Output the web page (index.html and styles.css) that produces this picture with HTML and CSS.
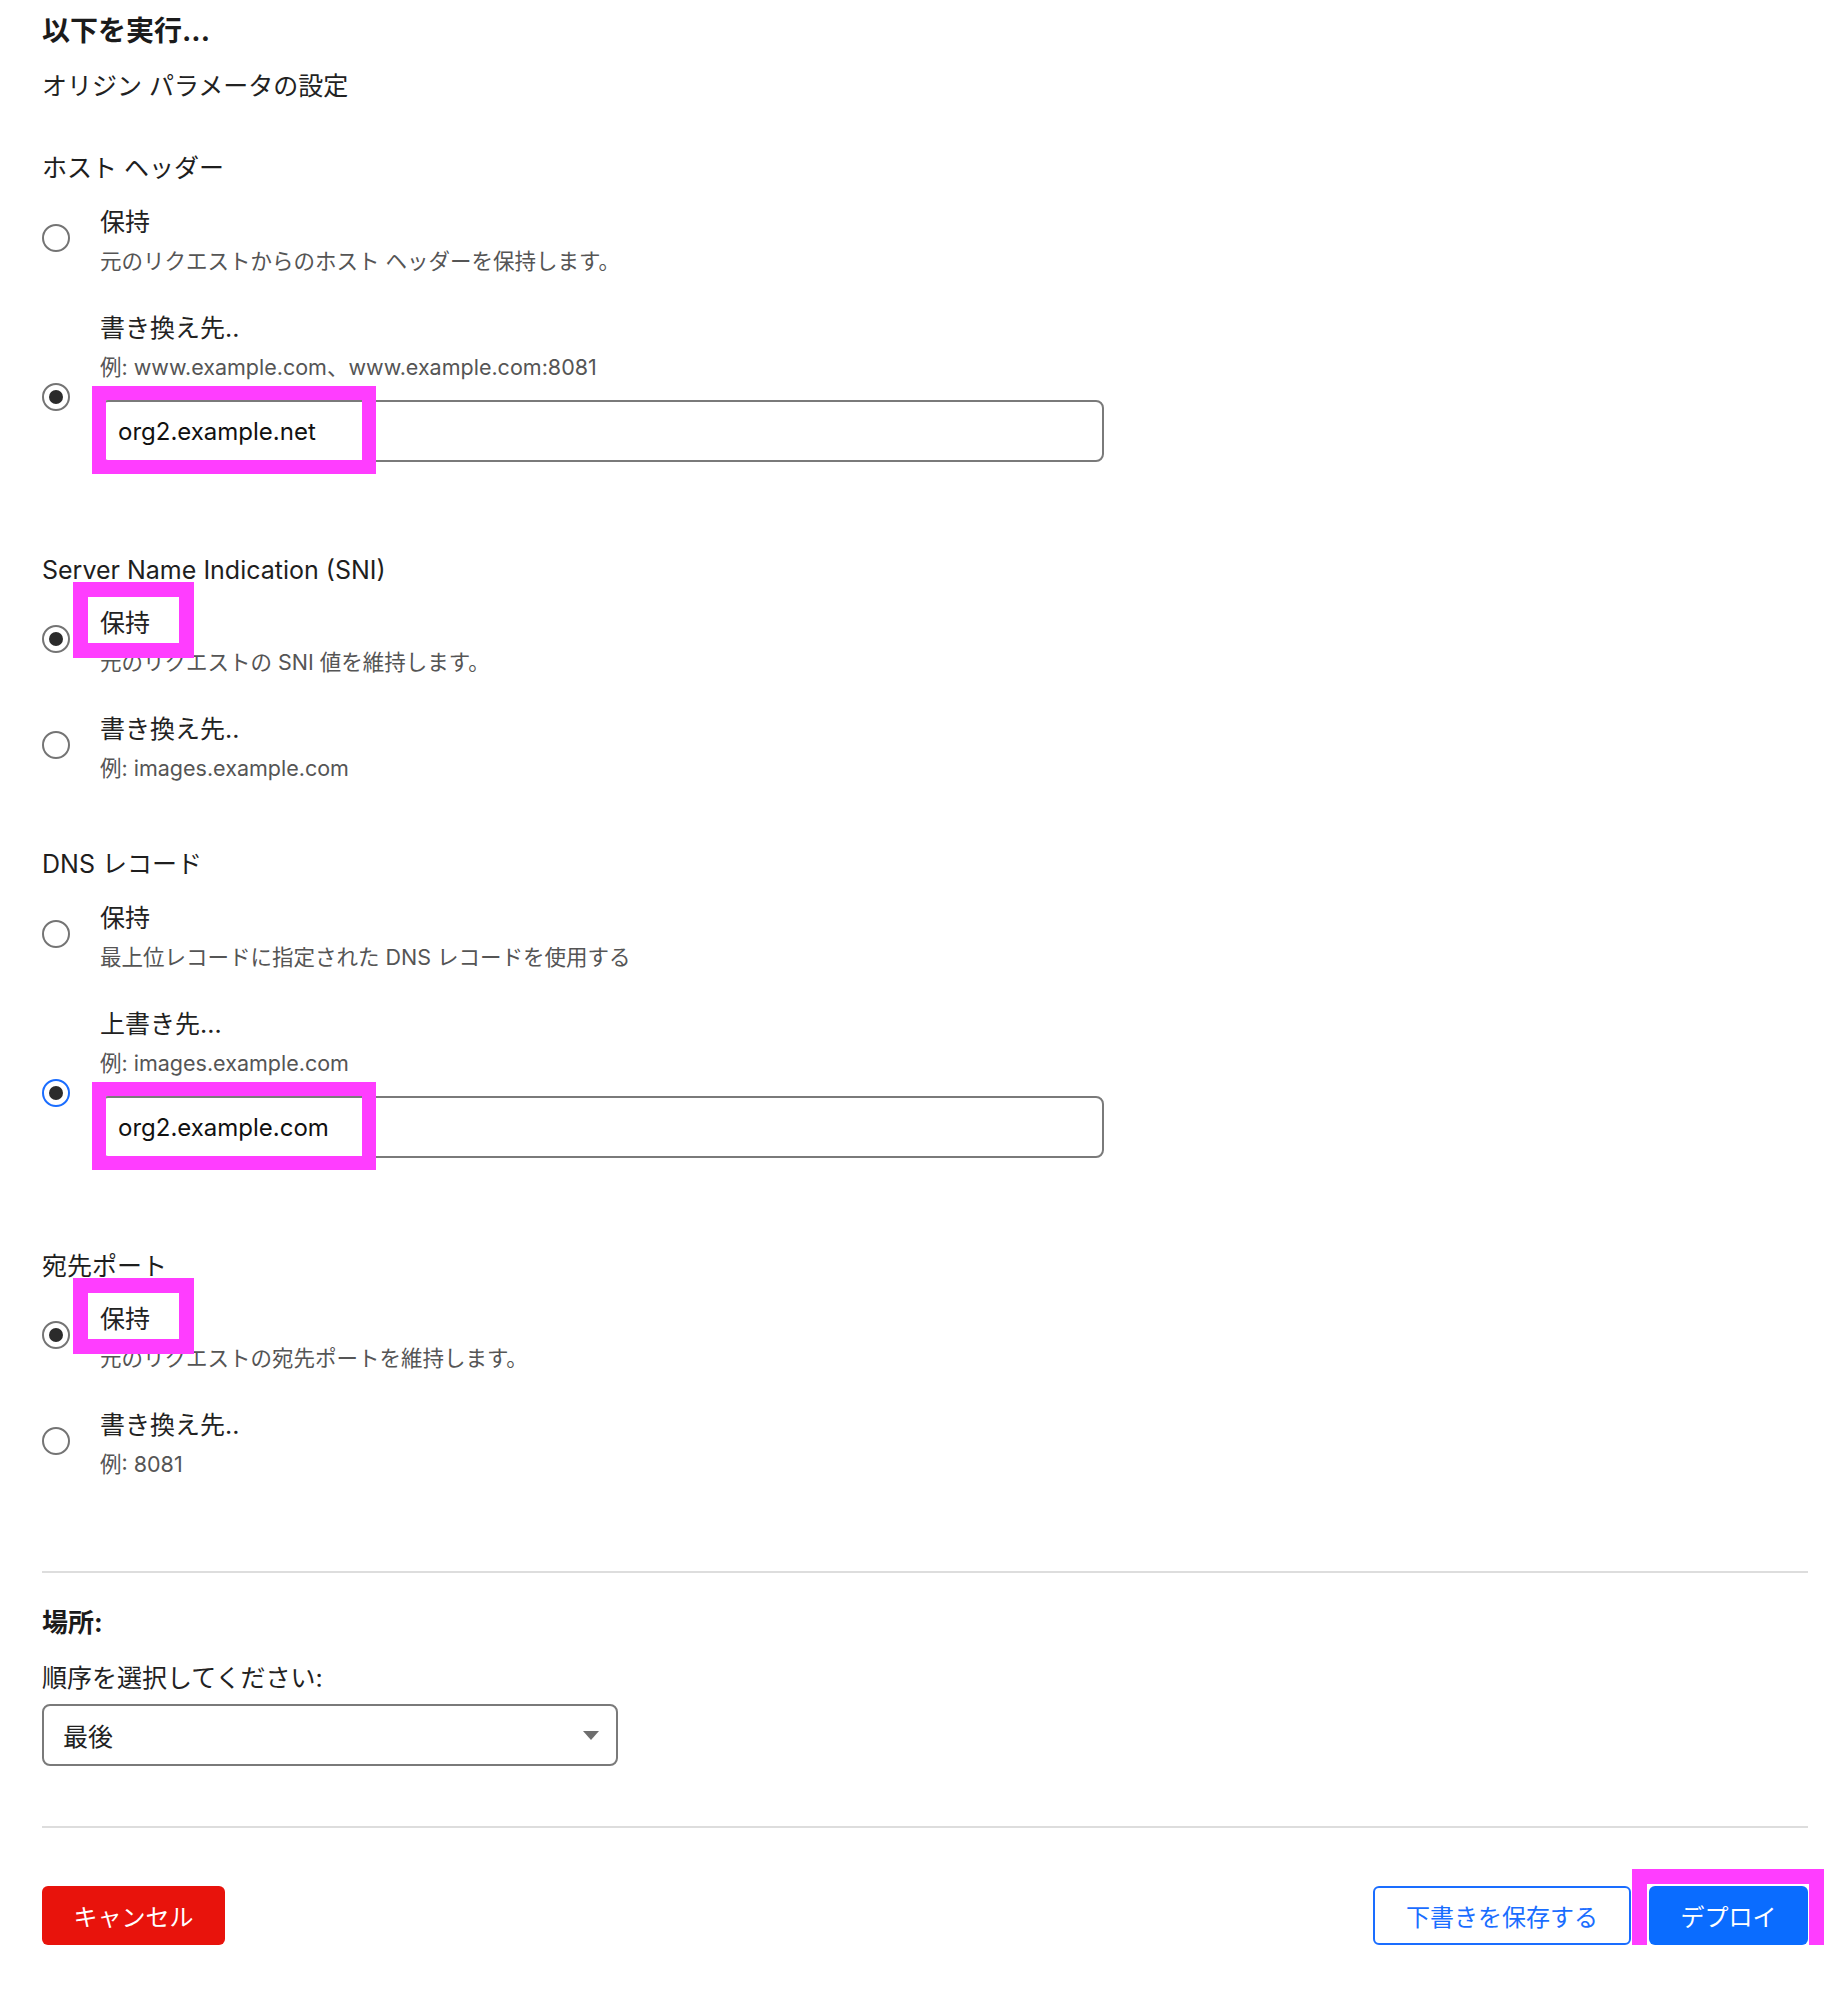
FILE: index.html
```html
<!DOCTYPE html>
<html lang="ja">
<head>
<meta charset="utf-8">
<title>以下を実行...</title>
<link rel="stylesheet" href="styles.css">
</head>
<body>
<div class="page">
  <h1 class="title">以下を実行...</h1>
  <p class="subtitle">オリジン パラメータの設定</p>

  <section class="group group-first">
    <h2 class="group-title">ホスト ヘッダー</h2>
    <div class="option">
      <span class="radio"></span>
      <div class="option-body">
        <div class="option-label">保持</div>
        <div class="option-desc">元のリクエストからのホスト ヘッダーを保持します。</div>
      </div>
    </div>
    <div class="option option-with-input">
      <span class="radio checked"></span>
      <div class="option-body">
        <div class="option-label">書き換え先..</div>
        <div class="option-desc">例: www.example.com、www.example.com:8081</div>
        <div class="field">
          <div class="text-input">org2.example.net</div>
          <span class="mark mark-input"></span>
        </div>
      </div>
    </div>
  </section>

  <section class="group">
    <h2 class="group-title">Server Name Indication (SNI)</h2>
    <div class="option option-tight">
      <span class="radio checked"></span>
      <div class="option-body">
        <div class="option-label label-marked">保持<span class="mark mark-label"></span></div>
        <div class="option-desc">元のリクエストの SNI 値を維持します。</div>
      </div>
    </div>
    <div class="option">
      <span class="radio"></span>
      <div class="option-body">
        <div class="option-label">書き換え先..</div>
        <div class="option-desc">例: images.example.com</div>
      </div>
    </div>
  </section>

  <section class="group">
    <h2 class="group-title">DNS レコード</h2>
    <div class="option">
      <span class="radio"></span>
      <div class="option-body">
        <div class="option-label">保持</div>
        <div class="option-desc">最上位レコードに指定された DNS レコードを使用する</div>
      </div>
    </div>
    <div class="option option-with-input">
      <span class="radio checked focused"></span>
      <div class="option-body">
        <div class="option-label">上書き先...</div>
        <div class="option-desc">例: images.example.com</div>
        <div class="field">
          <div class="text-input">org2.example.com</div>
          <span class="mark mark-input"></span>
        </div>
      </div>
    </div>
  </section>

  <section class="group">
    <h2 class="group-title">宛先ポート</h2>
    <div class="option option-tight">
      <span class="radio checked"></span>
      <div class="option-body">
        <div class="option-label label-marked">保持<span class="mark mark-label"></span></div>
        <div class="option-desc">元のリクエストの宛先ポートを維持します。</div>
      </div>
    </div>
    <div class="option">
      <span class="radio"></span>
      <div class="option-body">
        <div class="option-label">書き換え先..</div>
        <div class="option-desc">例: 8081</div>
      </div>
    </div>
  </section>

  <hr class="divider divider-top">

  <h2 class="place-title">場所:</h2>
  <div class="place-label">順序を選択してください:</div>
  <div class="select">
    <span class="select-value">最後</span>
    <span class="caret"></span>
  </div>

  <hr class="divider divider-bottom">

  <div class="actions">
    <button class="btn btn-cancel">キャンセル</button>
    <div class="actions-right">
      <button class="btn btn-save">下書きを保存する</button>
      <div class="deploy-wrap">
        <button class="btn btn-deploy">デプロイ</button>
        <span class="mark mark-deploy"></span>
      </div>
    </div>
  </div>
</div>
</body>
</html>
```

FILE: styles.css
```css
* {
  box-sizing: border-box;
}

html, body {
  margin: 0;
  padding: 0;
  background: #ffffff;
}

body {
  font-family: "Inter", "Noto Sans CJK JP", sans-serif;
  color: #222222;
}

.page {
  padding: 11px 40px 0 42px;
  width: 1848px;
}

.title {
  margin: 0;
  font-size: 28px;
  line-height: 40px;
  font-weight: 700;
  color: #1b1b1b;
}

.subtitle {
  margin: 16px 0 0;
  font-size: 25px;
  line-height: 38px;
  color: #222222;
}

.group {
  margin-top: 57px;
}

.group-first {
  margin-top: 44px;
}

.group-title {
  margin: 0;
  font-size: 25px;
  line-height: 38px;
  font-weight: 400;
  color: #1e1e1e;
}

.option {
  display: flex;
  align-items: flex-start;
  gap: 30px;
  margin-top: 28px;
}

.group-title + .option {
  margin-top: 16px;
}

.group-title + .option-tight {
  margin-top: 15px;
}

.radio {
  flex: none;
  width: 28px;
  height: 28px;
  margin-top: 21px;
  border: 2px solid #747474;
  border-radius: 50%;
  display: flex;
  align-items: center;
  justify-content: center;
  background: #fff;
}

.option-with-input .radio {
  margin-top: 74px;
}

.radio.checked::after {
  content: "";
  width: 14px;
  height: 14px;
  border-radius: 50%;
  background: #2b2b2b;
}

.radio.focused {
  border-color: #1a6dff;
}

.option-body {
  flex: 1;
  min-width: 0;
}

.option-label {
  font-size: 25px;
  line-height: 38px;
  color: #222222;
}

.label-marked {
  position: relative;
  width: max-content;
}

.option-desc {
  font-size: 21.5px;
  line-height: 40px;
  color: #555555;
}

.field {
  position: relative;
  width: 1004px;
  margin-top: 13px;
  margin-bottom: 32px;
}

.text-input {
  height: 62px;
  border: 2px solid #7a7a7a;
  border-radius: 8px;
  padding: 0 16px;
  display: flex;
  align-items: center;
  font-size: 24px;
  color: #111111;
  background: #fff;
}

.mark {
  position: absolute;
  border: 14px solid #ff3dff;
  pointer-events: none;
}

.mark-input {
  left: -8px;
  top: -14px;
  width: 284px;
  height: 88px;
}

.mark-label {
  left: -27px;
  top: -22px;
  width: 121px;
  height: 76px;
  border-width: 15px;
}

.divider {
  margin: 0;
  border: 0;
  border-top: 2px solid #dddddd;
  width: 1766px;
}

.divider-top {
  margin-top: 87px;
}

.place-title {
  margin: 31px 0 0;
  font-size: 26px;
  line-height: 38px;
  font-weight: 700;
  color: #1b1b1b;
}

.place-label {
  margin-top: 17px;
  font-size: 25px;
  line-height: 38px;
  color: #222222;
}

.select {
  margin-top: 7px;
  width: 576px;
  height: 62px;
  border: 2px solid #7a7a7a;
  border-radius: 8px;
  display: flex;
  align-items: center;
  justify-content: space-between;
  padding: 0 17px 0 19px;
  font-size: 25px;
  color: #222222;
}

.caret {
  width: 0;
  height: 0;
  border-left: 8px solid transparent;
  border-right: 8px solid transparent;
  border-top: 9px solid #6e6e6e;
}

.divider-bottom {
  margin-top: 60px;
}

.actions {
  width: 1766px;
  margin-top: 58px;
  display: flex;
  justify-content: space-between;
  align-items: center;
}

.actions-right {
  display: flex;
  align-items: center;
  gap: 18px;
}

.btn {
  height: 59px;
  border-radius: 6px;
  font-family: "Inter", "Noto Sans CJK JP", sans-serif;
  font-size: 24px;
  padding: 0;
  display: flex;
  align-items: center;
  justify-content: center;
  cursor: pointer;
}

.btn-cancel {
  width: 183px;
  background: #e8130c;
  border: 0;
  color: #ffffff;
}

.btn-save {
  width: 258px;
  background: #ffffff;
  border: 2px solid #1a6dff;
  color: #1a6dff;
}

.deploy-wrap {
  position: relative;
}

.btn-deploy {
  width: 159px;
  background: #0a6cff;
  border: 0;
  color: #ffffff;
}

.mark-deploy {
  left: -17px;
  top: -17px;
  right: -16px;
  bottom: -15px;
  border-width: 15px;
}
```
